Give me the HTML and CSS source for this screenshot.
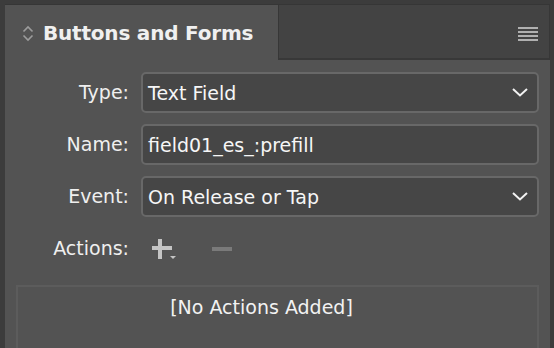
FILE: index.html
```html
<!DOCTYPE html>
<html>
<head>
<meta charset="utf-8">
<link rel="stylesheet" href="styles.css">
</head>
<body>
<div class="window">
  <div class="tabbar">
    <div class="tab active">
      <svg class="updown" width="12" height="17" viewBox="0 0 12 17"><path d="M1.5 6.5 L6 2 L10.5 6.5 M1.5 10.5 L6 15 L10.5 10.5" fill="none" stroke="#9c9c9c" stroke-width="1.6"/></svg>
      <span class="title">Buttons and Forms</span>
    </div>
    <div class="tab-rest">
      <div class="menu"><span></span><span></span><span></span><span></span></div>
    </div>
  </div>
  <div class="panel">
    <div class="form">
      <label class="lbl">Type:</label>
      <div class="field select"><span>Text Field</span>
        <svg class="chev" width="16" height="9" viewBox="0 0 16 9"><path d="M1 1 L8 7.5 L15 1" fill="none" stroke="#f2f2f2" stroke-width="2"/></svg>
      </div>
      <label class="lbl">Name:</label>
      <div class="field"><span>field01_es_:prefill</span></div>
      <label class="lbl">Event:</label>
      <div class="field select"><span>On Release or Tap</span>
        <svg class="chev" width="16" height="9" viewBox="0 0 16 9"><path d="M1 1 L8 7.5 L15 1" fill="none" stroke="#f2f2f2" stroke-width="2"/></svg>
      </div>
      <label class="lbl">Actions:</label>
      <div class="actions">
        <svg class="plus" width="26" height="24" viewBox="0 0 26 24"><path d="M8 1 V21 M0 10 H20" stroke="#c4c4c4" stroke-width="4"/><path d="M18 18 H24 L21 21 Z" fill="#c4c4c4"/></svg>
        <svg class="minus" width="20" height="4" viewBox="0 0 20 4"><rect width="20" height="4" fill="#7a7a7a"/></svg>
      </div>
    </div>
    <div class="list">
      <div class="empty">[No Actions Added]</div>
    </div>
  </div>
</div>
</body>
</html>
```
FILE: styles.css
```css
html, body {
  margin: 0;
  padding: 0;
  background: #3b3b3b;
}
.window {
  width: 554px;
  height: 348px;
  box-sizing: border-box;
  padding: 5px 4px 0 5px;
  background: #3c3c3c;
  overflow: hidden;
  font-family: "DejaVu Sans", "Liberation Sans", sans-serif;
  display: flex;
  flex-direction: column;
}
.tabbar {
  display: flex;
  height: 55px;
  flex: none;
  border-top: 1px solid #363636;
  margin-top: -1px;
}
.tab.active {
  width: 273px;
  background: #535353;
  display: flex;
  align-items: center;
  padding-left: 17px;
  box-sizing: border-box;
}
.updown {
  display: block;
  margin-right: 9px;
  margin-top: 2px;
}
.title {
  color: #f0f0f0;
  font-weight: bold;
  font-size: 20px;
  letter-spacing: -0.2px;
}
.tab-rest {
  flex: 1;
  background: #434343;
  border-left: 1px solid #373737;
  border-right: 1px solid #373737;
  border-bottom: 2px solid #383838;
  display: flex;
  align-items: center;
  justify-content: flex-end;
  padding-right: 11px;
}
.menu {
  display: flex;
  flex-direction: column;
  gap: 2px;
  margin-top: 4px;
}
.menu span {
  display: block;
  width: 20px;
  height: 2px;
  background: #b0b0b0;
}
.panel {
  flex: 1;
  background: #535353;
  width: 545px;
  padding: 12px 11px 0 11px;
  box-sizing: border-box;
}
.form {
  display: grid;
  grid-template-columns: 113px 1fr;
  column-gap: 12px;
  row-gap: 11px;
  grid-auto-rows: 41px;
}
.lbl {
  color: #efefef;
  font-size: 19px;
  display: flex;
  align-items: center;
  justify-content: flex-end;
  padding-bottom: 1px;
}
.field {
  background: #464646;
  border: 2px solid #686868;
  border-radius: 5px;
  display: flex;
  align-items: center;
  justify-content: space-between;
  padding: 0 9px 0 5px;
  color: #f6f6f6;
  font-size: 19px;
  box-sizing: border-box;
}
.chev {
  display: block;
}
.actions {
  display: flex;
  align-items: center;
  padding-left: 11px;
  gap: 34px;
}
.plus {
  display: block;
  margin-top: 2px;
}
.minus {
  display: block;
}
.list {
  margin-top: 16px;
  height: 80px;
  border: 2px solid #5c5c5c;
  border-bottom: 0;
  color: #f2f2f2;
  font-size: 19px;
}
.empty {
  text-align: center;
  padding-right: 32px;
  padding-top: 9px;
}
```
